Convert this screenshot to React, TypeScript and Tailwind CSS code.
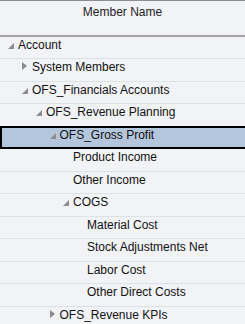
import React from "react";

type Row = { label: string; level: number; state: "open" | "closed" | "leaf"; selected?: boolean };

const rows: Row[] = [
  { label: "Account", level: 0, state: "open" },
  { label: "System Members", level: 1, state: "closed" },
  { label: "OFS_Financials Accounts", level: 1, state: "open" },
  { label: "OFS_Revenue Planning", level: 2, state: "open" },
  { label: "OFS_Gross Profit", level: 3, state: "open", selected: true },
  { label: "Product Income", level: 4, state: "leaf" },
  { label: "Other Income", level: 4, state: "leaf" },
  { label: "COGS", level: 4, state: "open" },
  { label: "Material Cost", level: 5, state: "leaf" },
  { label: "Stock Adjustments Net", level: 5, state: "leaf" },
  { label: "Labor Cost", level: 5, state: "leaf" },
  { label: "Other Direct Costs", level: 5, state: "leaf" },
  { label: "OFS_Revenue KPIs", level: 3, state: "closed" },
];

const indent = ["pl-[4px]", "pl-[18px]", "pl-[32px]", "pl-[45.5px]", "pl-[59px]", "pl-[73px]"];

function Icon({ state }: { state: Row["state"] }) {
  return (
    <div className="w-[14px] h-[15px] shrink-0 relative">
      {state === "open" && (
        <svg className="absolute left-[4px] top-[5px]" width="6" height="6" viewBox="0 0 6 6">
          <polygon points="6,0 6,6 0,6" fill="#8c8c8c" />
        </svg>
      )}
      {state === "closed" && (
        <svg className="absolute left-[4px] top-[2px]" width="5" height="8" viewBox="0 0 5 8">
          <polygon points="0,0 5,4 0,8" fill="#8a8a8a" />
        </svg>
      )}
    </div>
  );
}

export default function App() {
  return (
    <div
      className="w-[245px] h-[324px] overflow-hidden bg-[#f2f3f7] text-[12px] leading-[15px] text-[#111]"
      style={{ fontFamily: '"Liberation Sans", Arial, sans-serif' }}
    >
      <div className="h-[36.5px] border-t border-t-[#8d8d8d] border-b-2 border-b-[#a3a3a3] flex justify-center pt-[4px] text-[#222]">
        Member Name
      </div>
      {rows.map((r) => (
        <div
          key={r.label}
          className={
            r.selected
              ? "h-[23.5px] -mt-[1px] flex items-start bg-[#b4c6dc] border-2 border-r-0 border-black " + indent[r.level]
              : "h-[22.5px] flex items-start border-b border-b-[#dde2e8] " + indent[r.level]
          }
        >
          <div className={r.selected ? "flex items-start mt-[0.5px] -ml-[2px]" : "flex items-start mt-[1px]"}>
            <Icon state={r.state} />
            <span className="whitespace-nowrap">{r.label}</span>
          </div>
        </div>
      ))}
    </div>
  );
}
